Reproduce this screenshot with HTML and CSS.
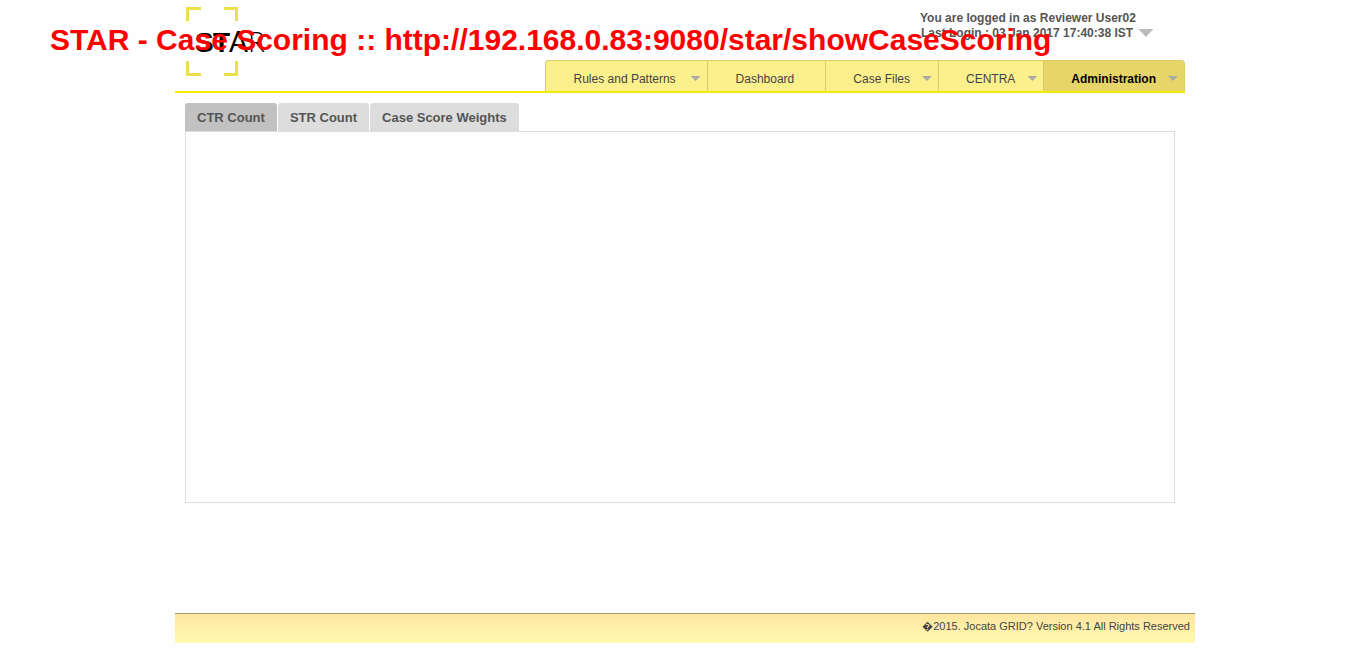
FILE: index.html
```html
<!DOCTYPE html>
<html lang="en">
<head>
<meta charset="utf-8">
<title>STAR - Case Scoring</title>
<link rel="stylesheet" href="styles.css">
</head>
<body>
<h1 class="page-title">STAR - Case Scoring :: http://192.168.0.83:9080/star/showCaseScoring</h1>
<div class="page">
  <header class="header">
    <a class="logo" href="#" aria-label="STAR">
      <svg width="84" height="70" viewBox="0 0 84 70">
        <path d="M1.500 14V1.500H15M38 1.500H50.500V14M50.500 54V67.500H38M15 67.500H1.500V54" fill="none" stroke="#eadf4c" stroke-width="3"/>
        <g fill="#000">
          <text class="logo-bold" x="9" y="45">S</text>
          <text class="logo-bold" x="27" y="45">T</text>
          <text class="logo-regular" x="43" y="45">A</text>
          <text class="logo-light" x="62" y="45">R</text>
        </g>
      </svg>
    </a>
    <div class="header-side">
      <div class="user">
        <div class="user-name">You are logged in as Reviewer User02</div>
        <div class="user-login">Last Login : 03 Jan 2017 17:40:38 IST <button class="user-toggle" type="button" aria-label="User menu"></button></div>
      </div>
      <nav class="nav">
        <a class="nav-item wide has-menu" href="#">Rules and Patterns</a>
        <a class="nav-item wide" href="#">Dashboard</a>
        <a class="nav-item has-menu" href="#">Case Files</a>
        <a class="nav-item has-menu" href="#">CENTRA</a>
        <a class="nav-item has-menu active" href="#">Administration</a>
      </nav>
    </div>
  </header>
  <main class="main">
    <div class="tabs" role="tablist">
      <button class="tab selected" type="button" role="tab" aria-selected="true">CTR Count</button>
      <button class="tab" type="button" role="tab" aria-selected="false">STR Count</button>
      <button class="tab" type="button" role="tab" aria-selected="false">Case Score Weights</button>
    </div>
    <section class="panel" role="tabpanel" aria-label="CTR Count"></section>
  </main>
  <footer class="footer">&#xFFFD;2015. Jocata GRID? Version 4.1 All Rights Reserved</footer>
</div>
</body>
</html>
```
FILE: styles.css
```css
* { box-sizing: border-box; }

body {
  margin: 0;
  padding-left: 21px;
  background: #fefefe;
  color: #555;
  font: 12px/15px "Liberation Sans", Arial, sans-serif;
}

/* Title printed over the header */
.page-title {
  position: absolute;
  top: 21px;
  left: 50px;
  z-index: 2;
  margin: 0;
  color: #f00;
  font-size: 30px;
  line-height: 38px;
  white-space: nowrap;
  pointer-events: none;
}

.page {
  max-width: 1020px;
  margin: 0 auto;
}

.header {
  display: flex;
  justify-content: space-between;
  height: 93px;
  margin-right: 10px;
  border-bottom: 2px solid #f5ea00;
}

.logo {
  padding: 7px 0 0 11px;
  line-height: 0;
}

.logo-bold { font: bold 28px "Liberation Sans", Arial, sans-serif; }
.logo-regular { font: 400 28px Lato, sans-serif; }
.logo-light { font: 300 28px Lato, sans-serif; }

.header-side {
  display: flex;
  flex-direction: column;
}

.user {
  align-self: flex-end;
  width: 265px;
  padding-top: 11px;
  font-weight: bold;
}

.user-login { padding-left: 1px; }

.user-toggle {
  width: 15px;
  height: 8px;
  margin-left: 2px;
  padding: 0;
  border: 0;
  background: #bbb;
  clip-path: polygon(0 0, 100% 0, 50% 100%);
}

.nav {
  display: flex;
  flex: 1;
  margin-top: 19px;
  border: 1px solid #dccd68;
  border-bottom: 0;
  border-radius: 4px 4px 0 0;
  background: #fcf08c;
  overflow: hidden;
}

.nav-item {
  position: relative;
  padding: 10px 27px 0;
  border-right: 1px solid #dccd68;
  color: #444;
  font-size: 12px;
  line-height: 16px;
  text-decoration: none;
}

.nav-item.has-menu { padding-right: 28px; }

.nav-item.wide { padding: 10px 31px 0 28px; }

.nav-item.has-menu::after {
  content: "";
  position: absolute;
  top: 15px;
  right: 6px;
  width: 10px;
  height: 5px;
  background: #aaa;
  clip-path: polygon(0 0, 100% 0, 50% 100%);
}

.nav-item.active {
  border-right: 0;
  background: #e6d568;
  color: #000;
  font-weight: bold;
}

.main { padding: 10px 20px 0 10px; }

.tabs {
  display: flex;
  gap: 1px;
}

.tab {
  height: 28px;
  padding: 1px 12px 0;
  border: 0;
  border-radius: 3px 3px 0 0;
  background: #ddd;
  color: #555;
  font: bold 13px/27px "Liberation Sans", Arial, sans-serif;
}

.tab.selected { background: #c1c1c1; }

.panel {
  min-height: 372px;
  border: 1px solid #ddd;
}

.footer {
  margin-top: 110px;
  padding: 5px 5px 9px;
  border-top: 1px solid #999977;
  background: linear-gradient(#ffe5a0, #fffbb0);
  color: #444;
  font-size: 11px;
  text-align: right;
}
```
